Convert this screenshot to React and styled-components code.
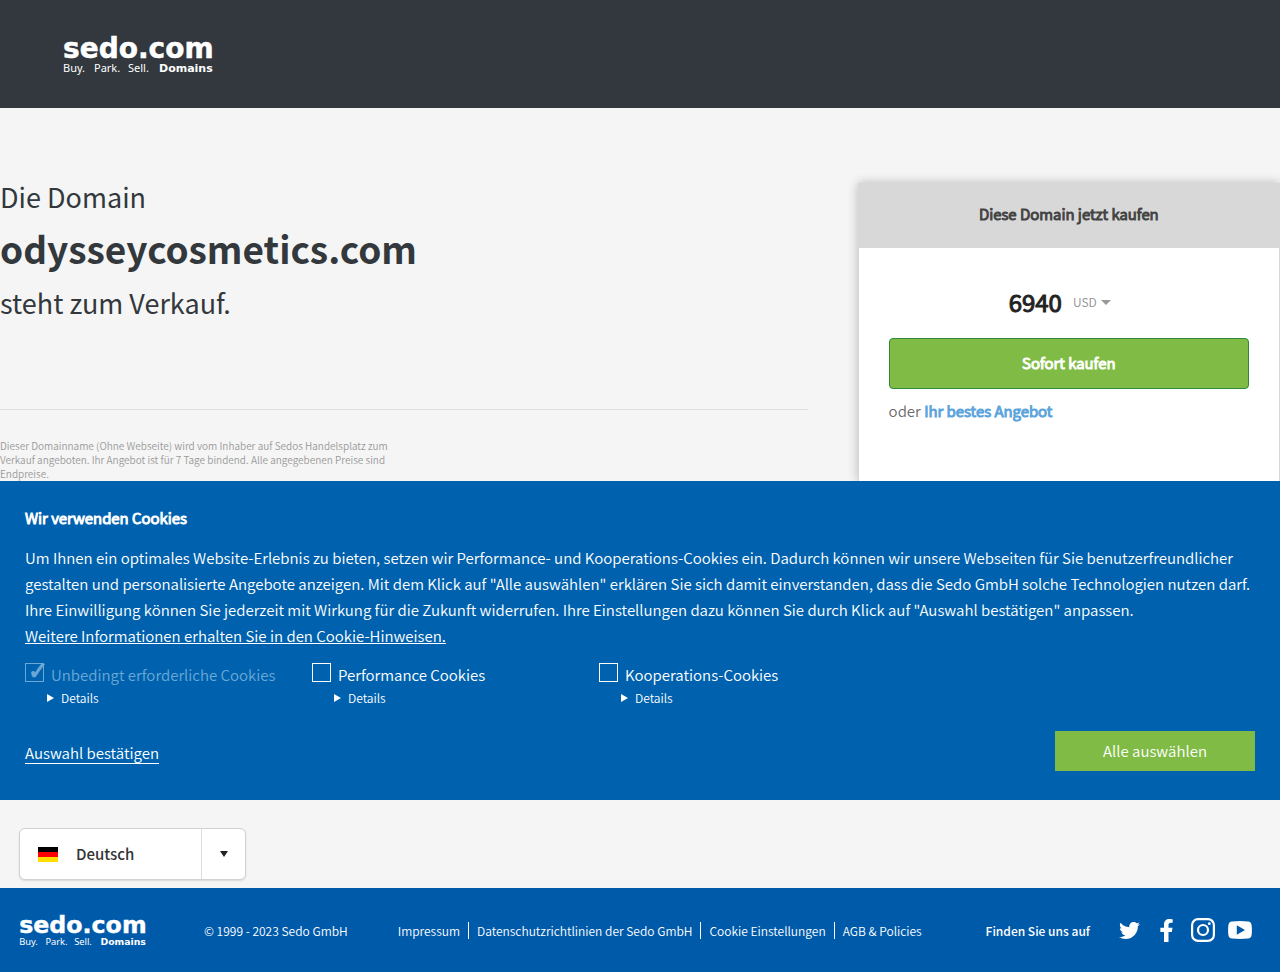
import styled, { createGlobalStyle, css } from 'styled-components';
import { useState } from 'react';
import { FaTwitter, FaFacebookF } from 'react-icons/fa';

const GlobalStyle = createGlobalStyle`
  * {
    box-sizing: border-box;
  }
  body {
    margin: 0;
    background-color: #f5f5f5;
    color: #32383c;
    font-family: "Noto Sans CJK SC", "Noto Sans", sans-serif;
    font-weight: 350;
  }
  button, select {
    font-family: inherit;
    font-weight: inherit;
  }
`;

const emphasis = css`
  font-weight: 350;
  -webkit-text-stroke: 1px currentColor;
`;

const Header = styled.header`
  display: flex;
  align-items: center;
  height: 108px;
  padding: 0 64px;
  background-color: #32383e;
`;

const LogoSvg = styled.svg`
  display: block;
  flex: none;
  width: ${(props) => props.$width}px;
  overflow: visible;
  fill: #fff;
`;

const Main = styled.main`
  display: flex;
  gap: 50px;
  min-height: 373px;
  padding-top: 75px;
`;

const Intro = styled.section`
  flex: 1;
`;

const Headline = styled.h1`
  margin: 0;
  padding-bottom: 92px;
  border-bottom: 1px solid #e0e0e0;
  font-size: 27px;
  font-weight: 400;
  line-height: 28px;
`;

const DomainName = styled.span`
  display: block;
  margin: 21px 0 25px;
  font-size: 37px;
  font-weight: 700;
  line-height: 32px;
`;

const Disclaimer = styled.p`
  max-width: 400px;
  margin: 29px 0 0;
  color: #9a9a9a;
  font-size: 10px;
  line-height: 14px;
`;

const Card = styled.section`
  flex: none;
  width: 33%;
  background-color: #fff;
  border: 1px solid #d8d8d8;
  border-bottom: 0;
  box-shadow: 0 0 10px rgba(0, 0, 0, 0.25);
`;

const CardTitle = styled.h2`
  margin: 0;
  padding: 18px 20px 22px;
  background-color: #d8d8d8;
  color: #444;
  font-size: 15px;
  line-height: 24px;
  text-align: center;
  ${emphasis}
`;

const CardBody = styled.div`
  padding: 38px 30px;
`;

const PriceRow = styled.div`
  display: flex;
  justify-content: center;
  align-items: center;
  gap: 11px;
  height: 32px;
  margin-bottom: 20px;
  padding-right: 18px;
`;

const Price = styled.strong`
  color: #222;
  font-size: 24px;
  font-weight: 400;
  line-height: 32px;
  -webkit-text-stroke: 1px currentColor;
`;

const Currency = styled.label`
  display: flex;
  align-items: center;
  gap: 4px;
`;

const CurrencySelect = styled.select`
  appearance: none;
  padding: 0 0 1px;
  border: 0;
  background: none;
  color: #909090;
  font-size: 12px;
`;

const BuyButton = styled.button`
  width: 100%;
  height: 51px;
  padding: 0 0 2px;
  border: 1px solid #2f8a3c;
  border-radius: 4px;
  background-color: #80bc45;
  color: #fff;
  font-size: 15px;
  ${emphasis}
`;

const OfferText = styled.p`
  margin: 10px 0 0;
  color: #6c6c6c;
  font-size: 15px;
  line-height: 24px;
`;

const OfferLink = styled.a`
  color: #5ba4dc;
  text-decoration: none;
  ${emphasis}
`;

const CookieBanner = styled.section`
  position: relative;
  padding: 25px 25px 29px;
  background-color: #0062ae;
  color: #fff;
`;

const CookieTitle = styled.h2`
  margin: 0 0 15px;
  font-size: 15px;
  line-height: 24px;
  ${emphasis}
`;

const CookieText = styled.p`
  margin: 0;
  font-size: 15px;
  line-height: 26px;
`;

const CookieLink = styled.a`
  color: inherit;
`;

const CookieOptions = styled.div`
  display: flex;
  margin-top: 14px;
`;

const CookieOption = styled.div`
  width: 287px;
`;

const OptionLabel = styled.label`
  display: flex;
  gap: 7px;
  color: ${(props) => (props.$muted ? '#6ba8d6' : '#fff')};
  font-size: 15px;
  line-height: 24px;
`;

const Checkbox = styled.input`
  appearance: none;
  flex: none;
  width: 19px;
  height: 19px;
  margin: 0;
  border: 1px solid currentColor;
  color: inherit;

  &:checked::before {
    content: '✓';
    display: block;
    margin: -2px 0 0 2px;
    font-family: "DejaVu Sans", sans-serif;
    font-size: 24px;
    line-height: 19px;
    -webkit-text-stroke: 1px currentColor;
  }
`;

const Details = styled.details`
  margin: 1px 0 0 22px;
  font-size: 12px;
  line-height: 20px;
`;

const Summary = styled.summary`
  display: flex;
  align-items: center;
  gap: 7px;
  cursor: pointer;

  &::before {
    content: '';
    border-left: 7px solid #fff;
    border-top: 4px solid transparent;
    border-bottom: 4px solid transparent;
  }
`;

const CookieActions = styled.div`
  display: flex;
  justify-content: space-between;
  align-items: center;
  margin-top: 23px;
`;

const ConfirmButton = styled.button`
  margin-top: 4px;
  padding: 0;
  border: 0;
  border-bottom: 1px solid #fff;
  background: none;
  color: #fff;
  font-size: 15px;
  line-height: 20px;
`;

const AcceptButton = styled.button`
  width: 200px;
  height: 40px;
  padding: 0 0 2px;
  border: 0;
  background-color: #80bc45;
  color: #fff;
  font-size: 15px;
`;

const LanguageBar = styled.div`
  padding: 28px 19px 8px;
`;

const LanguageBox = styled.label`
  display: grid;
  width: 227px;
  height: 52px;
  align-items: center;

  > * {
    grid-area: 1 / 1;
  }
`;

const LanguageSelect = styled.select`
  appearance: none;
  width: 100%;
  height: 100%;
  padding: 0 56px 2px;
  border: 1px solid #d2d2d2;
  border-radius: 6px;
  background-color: #fff;
  box-shadow: 0 1px 2px rgba(0, 0, 0, 0.12);
  color: #333;
  font-size: 15px;
  font-weight: 500;
`;

const Flag = styled.svg`
  width: 20px;
  height: 15px;
  margin-left: 19px;
  pointer-events: none;
`;

const ArrowCell = styled.span`
  display: flex;
  justify-content: center;
  align-items: center;
  justify-self: end;
  width: 45px;
  height: 50px;
  border-left: 1px solid #dcdcdc;
  pointer-events: none;
`;

const Arrow = styled.span`
  border-top: ${(props) => props.$height}px solid ${(props) => props.$color};
  border-left: ${(props) => props.$half}px solid transparent;
  border-right: ${(props) => props.$half}px solid transparent;
`;

const Footer = styled.footer`
  display: flex;
  align-items: center;
  height: 84px;
  padding: 0 28px 0 20px;
  background-color: #005aaa;
  color: #fff;
  font-size: 12px;
  line-height: 17px;
  white-space: nowrap;
`;

const Copyright = styled.span`
  margin: 0 50px 0 57px;
`;

const FooterNav = styled.nav`
  display: flex;
`;

const FooterLink = styled.a`
  padding: 0 8px;
  color: inherit;
  text-decoration: none;

  &:first-child {
    padding-left: 0;
  }
  & + & {
    border-left: 1px solid #fff;
  }
`;

const Social = styled.div`
  display: flex;
  align-items: center;
  gap: 27px;
  margin-left: auto;
  font-weight: 500;
`;

const SocialIcons = styled.div`
  display: flex;
  gap: 13px;
`;

const SocialLink = styled.a`
  display: flex;
  justify-content: center;
  align-items: center;
  width: 24px;
  height: 24px;
  color: #fff;
`;

const footerLinks = [
  'Impressum',
  'Datenschutzrichtlinien der Sedo GmbH',
  'Cookie Einstellungen',
  'AGB & Policies',
];

function Logo({ width }) {
  return (
    <LogoSvg $width={width} viewBox="0 0 150 42" role="img" aria-label="sedo.com">
      <text x="-1" y="25" fontFamily="DejaVu Sans" fontWeight="700" fontSize="28" stroke="#fff" strokeWidth=".5">sedo.com</text>
      <g fontFamily="Noto Sans" fontWeight="400" fontSize="11">
        <text x="-1" y="39">Buy.</text>
        <text x="30" y="39">Park.</text>
        <text x="64" y="39">Sell.</text>
      </g>
      <text x="95" y="39" fontFamily="DejaVu Sans" fontWeight="700" fontSize="11">Domains</text>
    </LogoSvg>
  );
}

function Instagram() {
  return (
    <svg width="24" height="24" viewBox="0 0 24 24" fill="none" stroke="currentColor" strokeWidth="2.2">
      <rect x="1.1" y="1.1" width="21.8" height="21.8" rx="6" />
      <circle cx="12" cy="12" r="5" />
      <circle cx="18.3" cy="5.7" r="1.4" fill="currentColor" stroke="none" />
    </svg>
  );
}

function Youtube() {
  return (
    <svg width="24" height="24" viewBox="0 0 24 24" fill="currentColor">
      <path
        fillRule="evenodd"
        d="M4 3.4Q12 2.6 20 3.4Q23.2 3.7 23.6 7Q24.2 12 23.6 17Q23.2 20.3 20 20.6Q12 21.4 4 20.6Q.8 20.3.4 17Q-.2 12 .4 7Q.8 3.7 4 3.4ZM8.8 7.2V16.8L17 12Z"
      />
    </svg>
  );
}

function App() {
  const [performance, setPerformance] = useState(false);
  const [cooperation, setCooperation] = useState(false);

  const handleAcceptAll = () => {
    setPerformance(true);
    setCooperation(true);
  }

  return (
    <>
      <GlobalStyle />
      <Header>
        <Logo width={150} />
      </Header>
      <Main>
        <Intro>
          <Headline>
            Die Domain
            <DomainName>odysseycosmetics.com</DomainName>
            steht zum Verkauf.
          </Headline>
          <Disclaimer>
            Dieser Domainname (Ohne Webseite) wird vom Inhaber auf Sedos Handelsplatz zum Verkauf
            angeboten. Ihr Angebot ist für 7 Tage bindend. Alle angegebenen Preise sind Endpreise.
          </Disclaimer>
        </Intro>
        <Card>
          <CardTitle>Diese Domain jetzt kaufen</CardTitle>
          <CardBody>
            <PriceRow>
              <Price>6940</Price>
              <Currency>
                <CurrencySelect aria-label="Währung">
                  <option>USD</option>
                </CurrencySelect>
                <Arrow $height={5} $half={5} $color="#999" />
              </Currency>
            </PriceRow>
            <BuyButton>Sofort kaufen</BuyButton>
            <OfferText>
              oder <OfferLink href="#angebot">Ihr bestes Angebot</OfferLink>
            </OfferText>
          </CardBody>
        </Card>
      </Main>
      <CookieBanner>
        <CookieTitle>Wir verwenden Cookies</CookieTitle>
        <CookieText>
          Um Ihnen ein optimales Website-Erlebnis zu bieten, setzen wir Performance- und
          Kooperations-Cookies ein. Dadurch können wir unsere Webseiten für Sie
          benutzerfreundlicher gestalten und personalisierte Angebote anzeigen. Mit dem Klick auf
          "Alle auswählen" erklären Sie sich damit einverstanden, dass die Sedo GmbH solche
          Technologien nutzen darf. Ihre Einwilligung können Sie jederzeit mit Wirkung für die
          Zukunft widerrufen. Ihre Einstellungen dazu können Sie durch Klick auf "Auswahl
          bestätigen" anpassen.
          <br />
          <CookieLink href="#cookies">Weitere Informationen erhalten Sie in den Cookie-Hinweisen.</CookieLink>
        </CookieText>
        <CookieOptions>
          <CookieOption>
            <OptionLabel $muted>
              <Checkbox type="checkbox" checked disabled readOnly />
              Unbedingt erforderliche Cookies
            </OptionLabel>
            <Details><Summary>Details</Summary></Details>
          </CookieOption>
          <CookieOption>
            <OptionLabel>
              <Checkbox type="checkbox" checked={performance} onChange={(e) => setPerformance(e.target.checked)} />
              Performance Cookies
            </OptionLabel>
            <Details><Summary>Details</Summary></Details>
          </CookieOption>
          <CookieOption>
            <OptionLabel>
              <Checkbox type="checkbox" checked={cooperation} onChange={(e) => setCooperation(e.target.checked)} />
              Kooperations-Cookies
            </OptionLabel>
            <Details><Summary>Details</Summary></Details>
          </CookieOption>
        </CookieOptions>
        <CookieActions>
          <ConfirmButton>Auswahl bestätigen</ConfirmButton>
          <AcceptButton onClick={handleAcceptAll}>Alle auswählen</AcceptButton>
        </CookieActions>
      </CookieBanner>
      <LanguageBar>
        <LanguageBox>
          <LanguageSelect aria-label="Sprache">
            <option>Deutsch</option>
          </LanguageSelect>
          <Flag viewBox="0 0 20 15">
            <rect width="20" height="5" fill="#000" />
            <rect y="5" width="20" height="5" fill="#f00" />
            <rect y="10" width="20" height="5" fill="#fd0" />
          </Flag>
          <ArrowCell>
            <Arrow $height={6} $half={4} $color="#222" />
          </ArrowCell>
        </LanguageBox>
      </LanguageBar>
      <Footer>
        <Logo width={127} />
        <Copyright>© 1999 - 2023 Sedo GmbH</Copyright>
        <FooterNav>
          {footerLinks.map((text) => (
            <FooterLink key={text} href="#footer">{text}</FooterLink>
          ))}
        </FooterNav>
        <Social>
          Finden Sie uns auf
          <SocialIcons>
            <SocialLink href="#twitter" aria-label="Twitter"><FaTwitter size={21} /></SocialLink>
            <SocialLink href="#facebook" aria-label="Facebook"><FaFacebookF size={23} /></SocialLink>
            <SocialLink href="#instagram" aria-label="Instagram"><Instagram /></SocialLink>
            <SocialLink href="#youtube" aria-label="YouTube"><Youtube /></SocialLink>
          </SocialIcons>
        </Social>
      </Footer>
    </>
  );
}

export default App;
